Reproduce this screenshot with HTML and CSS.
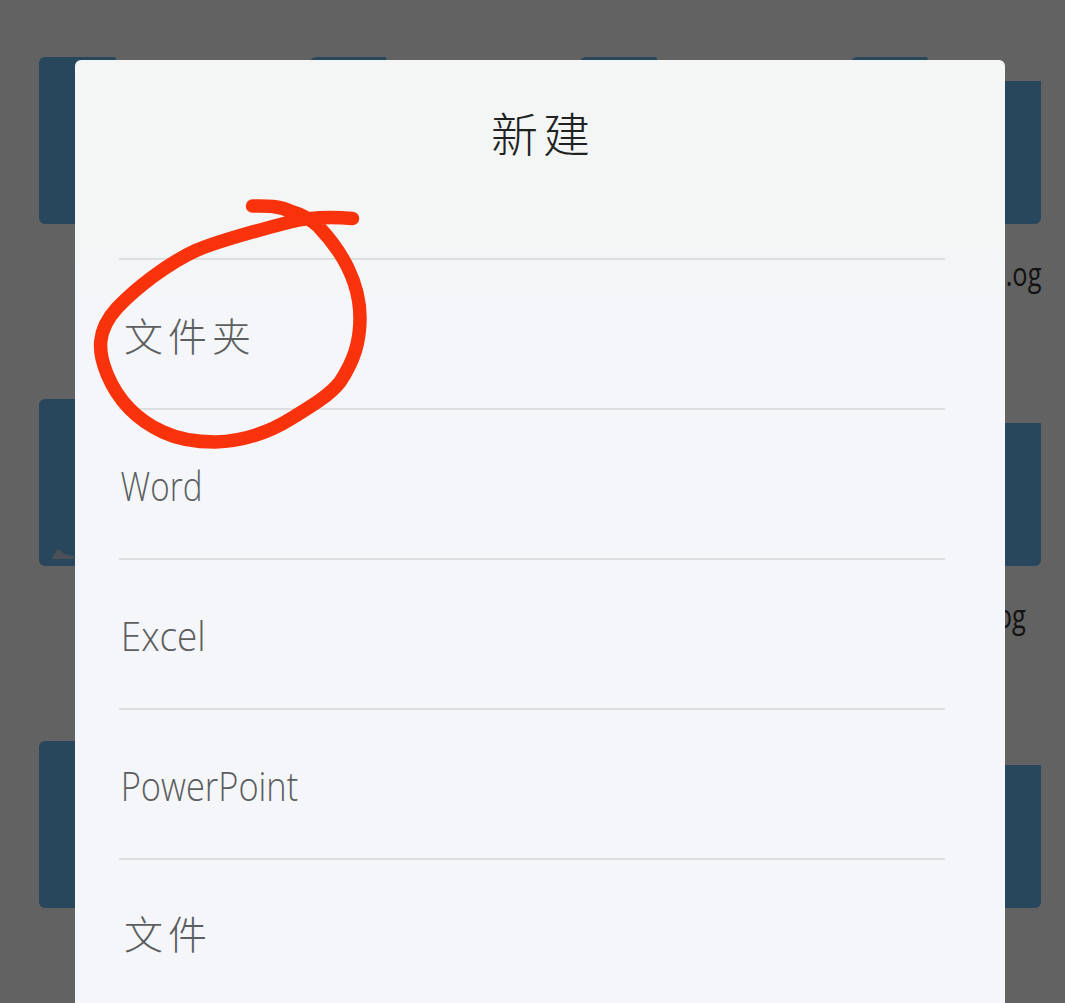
FILE: index.html
```html
<!DOCTYPE html>
<html lang="zh-CN">
<head>
<meta charset="utf-8">
<title>新建</title>
<link rel="stylesheet" href="styles.css">
</head>
<body>
<main class="files">
  <div class="file"><div class="folder"></div></div>
  <div class="file"><div class="folder"></div></div>
  <div class="file"><div class="folder"></div></div>
  <div class="file"><div class="folder"></div><span class="label">.og</span></div>
  <div class="file"><div class="folder"><svg class="badge" viewBox="0 0 24 14"><path d="M1 12 6 4Q9 2 12 7L17 9 23 10V13H1Z"/></svg></div></div>
  <div class="file"><div class="folder"></div></div>
  <div class="file"><div class="folder"></div></div>
  <div class="file"><div class="folder"></div><span class="label label-short">og</span></div>
  <div class="file"><div class="folder"></div></div>
  <div class="file"><div class="folder"></div></div>
  <div class="file"><div class="folder"></div></div>
  <div class="file"><div class="folder"></div></div>
</main>
<div class="scrim">
  <section class="dialog">
    <h1 class="title">新建</h1>
    <ul class="options">
      <li class="option"><span class="han">文件夹</span></li>
      <li class="option"><span class="latin word">Word</span></li>
      <li class="option"><span class="latin excel">Excel</span></li>
      <li class="option"><span class="latin ppt">PowerPoint</span></li>
      <li class="option"><span class="han">文件</span></li>
    </ul>
  </section>
</div>
<svg class="marker" viewBox="0 0 1065 1003">
  <path d="M352.500 218.500C333 217 310 217 290 222C255 231 217 242 197 250C168 263 136 288 117 308C96 331 98 352 107 374C119 403 139 421 163 432C180 440 197 442 215 442C246 441 270 432 292 418C310 407 329 396 340 382C354 361 360 342 360 318C360 282 341 250 318 226C309 218 300 214 290 211C277 205 264 206 252.500 206"/>
</svg>
</body>
</html>
```
FILE: styles.css
```css
* { box-sizing: border-box; }

body {
  margin: 0;
  height: 1003px;
  overflow: hidden;
  background: #f3f5f3;
  font-family: "Open Sans", "Noto Sans CJK SC", sans-serif;
}

.files {
  display: grid;
  grid-template-columns: repeat(4, 190px);
  grid-template-rows: 342px 342px 262px;
  justify-content: space-between;
  height: 1003px;
  padding: 57px 24px 0 39px;
}

.file {
  display: flex;
  flex-direction: column;
}

.folder {
  display: flex;
  align-items: flex-end;
  flex: none;
  height: 167px;
  padding: 0 0 6px 12px;
  background: #64b2e8;
  border-radius: 6px;
  clip-path: polygon(0 0, 76px 0, 84px 24px, 100% 24px, 100% 100%, 0 100%);
}

.badge {
  width: 24px;
  height: 14px;
  fill: #b9c9d6;
}

.label {
  align-self: flex-end;
  margin-top: 28px;
  font-size: 33px;
  line-height: 44px;
  color: #303030;
  transform: scaleX(0.77);
  transform-origin: right;
}

.label-short { margin-right: 15px; }

.scrim {
  position: fixed;
  inset: 0;
  padding: 60px 60px 0 75px;
  background: rgba(0, 0, 0, 0.6);
}

.dialog {
  height: 943px;
  padding: 0 60px 0 44px;
  border-radius: 6px 6px 0 0;
  background: linear-gradient(#f3f6f5 0, #f3f6f5 180px, #f4f6f9 240px);
}

.title {
  margin: 0;
  height: 198px;
  padding: 36px 0 0 22px;
  font-size: 47px;
  font-weight: 300;
  line-height: 76px;
  letter-spacing: 5px;
  text-align: center;
  color: #202222;
}

.options {
  margin: 0;
  padding: 0;
  list-style: none;
}

.option {
  display: flex;
  align-items: center;
  height: 150px;
  border-top: 2px solid #dcdfe0;
  color: #5c5e60;
  white-space: nowrap;
}

.option:last-child { height: 145px; padding-bottom: 0; }

.han {
  padding-left: 5px;
  font-family: "Noto Sans CJK SC", sans-serif;
  font-size: 39px;
  font-weight: 300;
  line-height: 54px;
  letter-spacing: 5px;
}

.latin {
  padding: 2px 0 0 2px;
  font-family: "Open Sans", sans-serif;
  font-size: 41px;
  font-weight: 300;
  transform-origin: left;
}

.word { transform: scaleX(0.81); }
.excel { transform: scaleX(0.9); }
.ppt { transform: scaleX(0.84); }

.marker {
  position: fixed;
  inset: 0;
  width: 1065px;
  height: 1003px;
  fill: none;
  stroke: #f8330c;
  stroke-width: 13.5;
  stroke-linecap: round;
}
```
